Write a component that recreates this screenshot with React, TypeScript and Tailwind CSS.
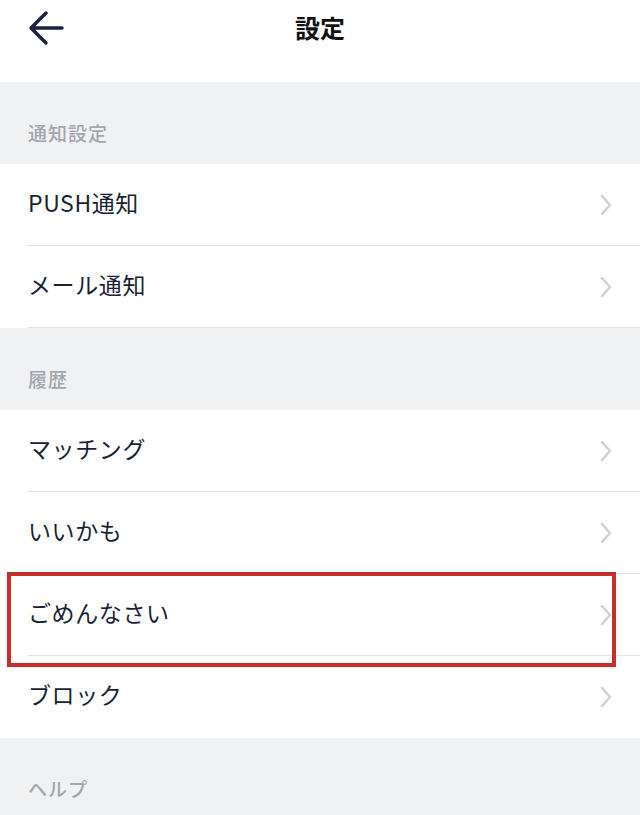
const font = { fontFamily: '"Noto Sans CJK JP", "Noto Sans", sans-serif' };

function Chevron() {
  return (
    <svg width="14" height="22" viewBox="0 0 14 22" fill="none" className="shrink-0">
      <path d="M3 2 L11 11 L3 20" stroke="#cfd0d4" strokeWidth="2.5" strokeLinecap="round" strokeLinejoin="round" />
    </svg>
  );
}

function SectionLabel({ label }: { label: string }) {
  return (
    <div className="h-[82px] bg-[#f0f1f3] flex items-end px-[28px] pb-[17px]">
      <span className="text-[19px] leading-[28px] font-medium tracking-[1px] text-[#a3a6ae]">{label}</span>
    </div>
  );
}

function Row({ label, divider = true, highlight = false }: { label: string; divider?: boolean; highlight?: boolean }) {
  return (
    <div className="relative bg-white">
      <div
        className={
          "ml-[28px] h-[82px] flex items-center justify-between pr-[27px] " +
          (divider ? "border-b border-[#e3e3e6]" : "")
        }
      >
        <span className="text-[23px] tracking-[0.6px] text-[#1a1f36] leading-none pb-[5px]">{label}</span>
        <Chevron />
      </div>
      {highlight && (
        <div className="absolute z-10 left-[7px] top-[-2px] w-[609px] h-[95px] border-4 border-[#c62f2a] pointer-events-none" />
      )}
    </div>
  );
}

export default function App() {
  return (
    <div className="w-[640px] h-[815px] overflow-hidden bg-white" style={font}>
      <header className="h-[82px] bg-white">
        <div className="h-[56px] grid grid-cols-[1fr_auto_1fr] items-center px-[28px]">
          <svg width="36" height="36" viewBox="0 0 36 36" fill="none">
            <path d="M34 18 H4 M18 3 L3 18 L18 33" stroke="#1b2140" strokeWidth="3.5" strokeLinecap="round" strokeLinejoin="round" />
          </svg>
          <h1 className="text-[25px] font-bold text-[#111111] leading-none pb-[2px]">設定</h1>
          <div />
        </div>
      </header>

      <SectionLabel label="通知設定" />
      <Row label="PUSH通知" />
      <Row label="メール通知" />

      <SectionLabel label="履歴" />
      <Row label="マッチング" />
      <Row label="いいかも" />
      <Row label="ごめんなさい" highlight />
      <Row label="ブロック" divider={false} />

      <SectionLabel label="ヘルプ" />
    </div>
  );
}
